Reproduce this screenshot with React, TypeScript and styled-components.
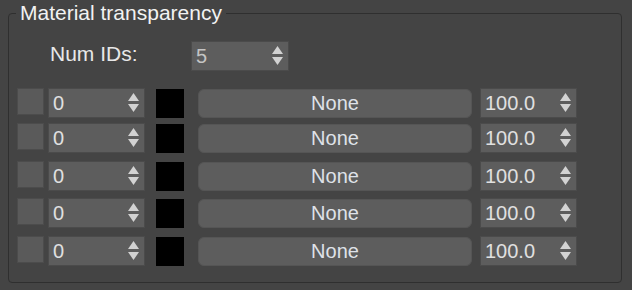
import * as React from 'react';
import styled, {createGlobalStyle} from "styled-components";

const GlobalStyle = createGlobalStyle`
  html, body {
    margin: 0;
    padding: 0;
    background-color: #444444;
  }
  body {
    font-family: "Liberation Sans", Arial, sans-serif;
    color: #e4e4e4;
  }
`

const Group = styled.fieldset`
  margin: 3px 10px 0 8px;
  padding: 0 8px 16px 8px;
  height: 280px;
  box-sizing: border-box;

  border: 1px solid #2f2f2f;
  border-radius: 4px;
`

const Legend = styled.legend`
  margin-left: -1px;
  padding: 0 4px;

  font-size: 21px;
  line-height: 20px;
  color: #f2f2f2;
`

const Content = styled.div`
  display: flex;
  flex-direction: column;
  padding-top: 18px;
`

const NumRow = styled.div`
  display: flex;
  align-items: center;
  height: 30px;
  margin-left: 33px;
  margin-bottom: 17px;
`

const Label = styled.span`
  width: 141px;
  font-size: 21px;
  color: #e8e8e8;
  position: relative;
  top: -2px;
`

const Row = styled.div<{ $gap: number }>`
  display: flex;
  align-items: flex-start;
  height: 30px;
  margin-top: ${props => props.$gap}px;
`

const Check = styled.div`
  width: 27px;
  height: 27px;
  box-sizing: border-box;
  border: 1px solid #4c4c4c;
  background-color: #5a5a5a;
  margin-right: 4px;
`

const Spinner = styled.div<{ $width: number; $dim?: boolean }>`
  display: flex;
  align-items: center;
  justify-content: space-between;

  width: ${props => props.$width}px;
  height: 30px;
  box-sizing: border-box;
  padding: 0 5px 0 4px;

  border: 1px solid #4b4b4b;
  background-color: #5d5d5d;

  font-size: 20px;
  color: ${props => props.$dim ? '#c4c4c4' : '#e0e0e0'};
`

const Swatch = styled.div`
  width: 28px;
  height: 29px;
  margin: 1px 14px 0 11px;
  background-color: #000000;
`

const MapButton = styled.div`
  display: flex;
  align-items: center;
  justify-content: center;

  width: 274px;
  height: 29px;
  margin: 1px 8px 0 0;
  box-sizing: border-box;

  border: 1px solid #555555;
  border-radius: 6px;
  background-color: #5d5d5d;

  font-size: 20px;
  color: #dfe2e8;
`

const Arrows = () => (
    <svg width="11" height="20" viewBox="0 0 11 20">
        <polygon points="0,8 5.5,0 11,8" fill="#d2d2d2"/>
        <polygon points="0,11 11,11 5.5,19" fill="#d2d2d2"/>
    </svg>
)

const rows = [0, 5, 8, 7, 8];

export default function App() {
    return (
        <>
            <GlobalStyle/>
            <Group>
                <Legend>Material transparency</Legend>
                <Content>
                    <NumRow>
                        <Label>Num IDs:</Label>
                        <Spinner $width={98} $dim>
                            <span>5</span>
                            <Arrows/>
                        </Spinner>
                    </NumRow>
                    {rows.map((gap, i) => (
                        <Row key={i} $gap={gap}>
                            <Check/>
                            <Spinner $width={97}>
                                <span>0</span>
                                <Arrows/>
                            </Spinner>
                            <Swatch/>
                            <MapButton>None</MapButton>
                            <Spinner $width={97}>
                                <span>100.0</span>
                                <Arrows/>
                            </Spinner>
                        </Row>
                    ))}
                </Content>
            </Group>
        </>
    );
}
